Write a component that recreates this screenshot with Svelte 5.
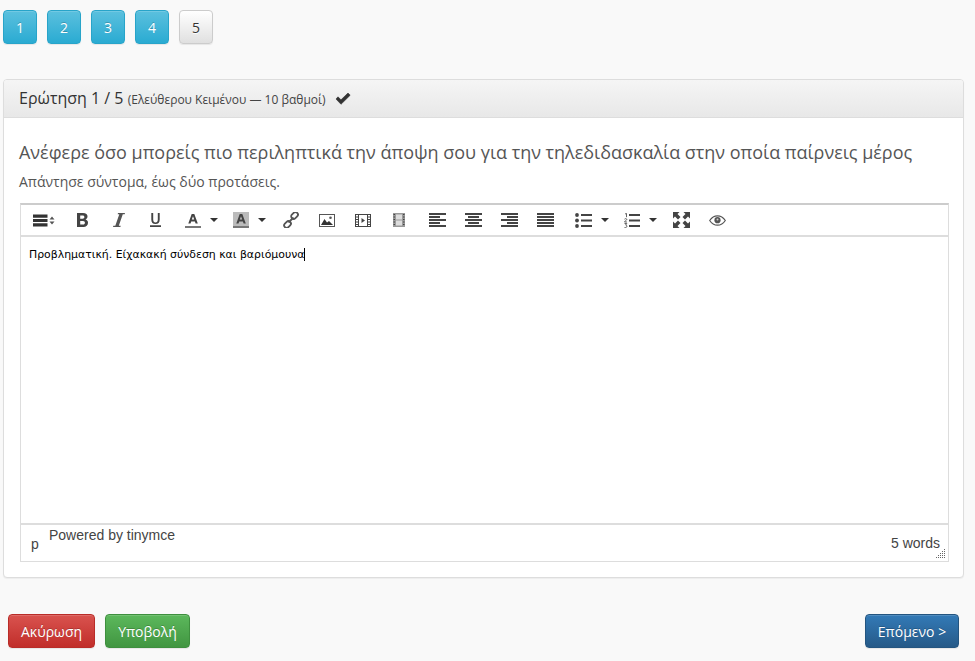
<script>
  const steps = [1, 2, 3, 4];
</script>

<div class="page">
  <nav class="steps">
    {#each steps as s}
      <button class="btn step info">{s}</button>
    {/each}
    <button class="btn step plain">5</button>
  </nav>

  <section class="panel">
    <header class="head">
      <h3>Ερώτηση 1 / 5 <small>(Ελεύθερου Κειμένου — 10 βαθμοί)</small></h3>
      <svg class="check" viewBox="0 0 16 13" width="16" height="13"><path d="M1 7l2-2.2 3 3L13 1l2.2 2.2L6 12.3z" fill="#333" stroke="#333" stroke-width=".6" stroke-linejoin="round"/></svg>
    </header>
    <div class="body">
      <p class="question">Ανέφερε όσο μπορείς πιο περιληπτικά την άποψη σου για την τηλεδιδασκαλία στην οποία παίρνεις μέρος</p>
      <p class="hint">Απάντησε σύντομα, έως δύο προτάσεις.</p>

      <div class="editor">
        <div class="toolbar">
          <span class="tool t-format">
            <svg viewBox="0 0 22 13" width="22" height="13"><path d="M0 .5h14.500v3.200H0zM0 4.900h14.500v3.200H0zM0 9.300h14.500v3.200H0z" fill="#333"/><path d="M16.500 5.600l2.500-3 2.500 3zM16.500 7.400l2.500 3 2.500-3z" fill="#555"/></svg>
          </span>
          <span class="tool t-b"><svg viewBox="0 0 11 14" width="11" height="14"><path fill-rule="evenodd" d="M0 0h6c3 0 4.500 1.300 4.500 3.500 0 1.400-.8 2.500-2 3 1.600.4 2.500 1.600 2.500 3.300C11 12.500 9.200 14 6.300 14H0zM3.200 2.400v3.400h2.400c1.100 0 1.800-.6 1.800-1.700S6.700 2.400 5.600 2.400zM3.200 8v3.600h2.800c1.300 0 1.900-.7 1.900-1.800S7.300 8 6 8z" fill="#444"/></svg></span>
          <span class="tool t-i"><svg viewBox="0 0 12 14" width="12" height="14"><path d="M5 0h7l-.3 1.300H9.800L5.800 12.700h1.900L7.400 14H0l.3-1.300h2L6.300 1.300H4.700z" fill="#555"/></svg></span>
          <span class="tool t-u"><svg viewBox="0 0 11 14" width="11" height="14"><path d="M1.300 0h1.900v6.500c0 1.900.8 2.900 2.300 2.900s2.300-1 2.300-2.900V0h1.900v6.500c0 3-1.500 4.500-4.200 4.500S1.300 9.500 1.300 6.500zM0 12.300h11V14H0z" fill="#444"/></svg></span>
          <span class="tool t-fc">
            <svg viewBox="0 0 16 16" width="16" height="16"><path fill-rule="evenodd" d="M6.700 2h2.600l3.500 9.500h-2.200l-.7-2.100H6.200l-.7 2.100H3.300zM6.800 7.600h2.400L8 4.300z" fill="#444"/><rect y="14" width="16" height="2" fill="#777"/></svg>
            <i class="caret"></i>
          </span>
          <span class="tool t-bc">
            <svg viewBox="0 0 16 16" width="16" height="16"><rect width="16" height="16" fill="#bbb"/><path fill-rule="evenodd" d="M6.700 2h2.600l3.500 9.500h-2.200l-.7-2.100H6.200l-.7 2.100H3.300zM6.800 7.600h2.400L8 4.300z" fill="#444"/><rect y="14" width="16" height="2" fill="#777"/></svg>
            <i class="caret"></i>
          </span>
          <span class="tool t-link"><svg viewBox="0 0 16 16" width="16" height="16"><g fill="none" stroke="#555" stroke-width="1.800"><rect x="7.800" y="1" width="7.500" height="5" rx="2.500" transform="rotate(-45 11.500 3.500)"/><rect x=".8" y="10" width="7.500" height="5" rx="2.500" transform="rotate(-45 4.500 12.500)"/><path d="M5.500 10.500l5-5"/></g></svg></span>
          <span class="tool t-img"><svg viewBox="0 0 16 13" width="16" height="13"><rect x=".5" y=".5" width="15" height="12" fill="#fff" stroke="#555"/><path d="M2 11l3.500-6 2.500 3.500 2-1.500 4 4z" fill="#333"/><circle cx="11.500" cy="3.800" r="1.300" fill="#555"/></svg></span>
          <span class="tool t-vid"><svg viewBox="0 0 16 13" width="16" height="13"><rect x=".5" y=".5" width="15" height="12" fill="#fff" stroke="#444"/><path d="M0 3h3.500M0 5.500h3.500M0 8h3.500M0 10.500h3.500M12.500 3H16M12.500 5.500H16M12.500 8H16M12.500 10.500H16M3.500 0v13M12.500 0v13" stroke="#444"/><path d="M6.500 4L10 6.500 6.500 9z" fill="#444"/></svg></span>
          <span class="tool t-media"><svg viewBox="0 0 12 14" width="12" height="14"><rect width="12" height="14" fill="#999"/><rect x="3" y="1.500" width="6" height="5" fill="#ddd"/><rect x="3" y="7.500" width="6" height="5" fill="#ddd"/><path d="M.5 1.500h1.500M.5 4h1.500M.5 6.500h1.500M.5 9h1.500M.5 11.500h1.500M10 1.500h1.500M10 4h1.500M10 6.500h1.500M10 9h1.500M10 11.500h1.500" stroke="#444"/></svg></span>
          <span class="tool t-al1"><svg viewBox="0 0 17 14" width="17" height="14"><path d="M0 0h17v2H0zM0 3h11v2H0zM0 6h17v2H0zM0 9h11v2H0zM0 12h17v2H0z" fill="#444"/></svg></span>
          <span class="tool t-al2"><svg viewBox="0 0 17 14" width="17" height="14"><path d="M0 0h17v2H0zM3 3h11v2H3zM0 6h17v2H0zM3 9h11v2H3zM0 12h17v2H0z" fill="#444"/></svg></span>
          <span class="tool t-al3"><svg viewBox="0 0 17 14" width="17" height="14"><path d="M0 0h17v2H0zM6 3h11v2H6zM0 6h17v2H0zM6 9h11v2H6zM0 12h17v2H0z" fill="#444"/></svg></span>
          <span class="tool t-al4"><svg viewBox="0 0 17 14" width="17" height="14"><path d="M0 0h17v2H0zM0 3h17v2H0zM0 6h17v2H0zM0 9h17v2H0zM0 12h17v2H0z" fill="#444"/></svg></span>
          <span class="tool t-ul">
            <svg viewBox="0 0 17 15" width="17" height="15"><circle cx="2" cy="2" r="1.900" fill="#444"/><circle cx="2" cy="7.500" r="1.900" fill="#444"/><circle cx="2" cy="13" r="1.900" fill="#444"/><path d="M6 1.100h11v1.800H6zM6 6.600h11v1.800H6zM6 12.100h11v1.800H6z" fill="#444"/></svg>
            <i class="caret"></i>
          </span>
          <span class="tool t-ol">
            <svg viewBox="0 0 16 15" width="16" height="15"><path d="M1 1l1.500-.6V4.200M.5 6.200c.5-.8 2.300-.8 2.300.3 0 .8-2.300 1.500-2.300 2.500h2.500M.5 10.500h2.300l-1.200 1.500c1.800 0 1.800 2.500 0 2.500H.5" fill="none" stroke="#555" stroke-width=".9"/><path d="M5 1.100h11v1.800H5zM5 6.600h11v1.800H5zM5 12.100h11v1.800H5z" fill="#444"/></svg>
            <i class="caret"></i>
          </span>
          <span class="tool t-full"><svg viewBox="0 0 17 16" width="17" height="16"><path d="M0 0h6.500L4.500 2l3 3L5 7.500l-3-3-2 2zM17 0v6.500l-2-2-3 3L9.500 5l3-3-2-2zM0 16V9.500l2 2 3-3L7.500 11l-3 3 2 2zM17 16h-6.500l2-2-3-3L12 8.500l3 3 2-2z" fill="#444"/></svg></span>
          <span class="tool t-eye"><svg viewBox="0 0 17 11" width="17" height="11"><path d="M.7 5.500C3 2 5.700.8 8.500.8s5.500 1.200 7.800 4.700c-2.300 3.500-5 4.700-7.800 4.700S3 9 .7 5.500z" fill="#fff" stroke="#555" stroke-width="1.200"/><circle cx="8.500" cy="5.200" r="3.100" fill="#555"/><circle cx="8.500" cy="4.500" r="1" fill="#ccc"/></svg></span>
        </div>
        <div class="content"><span class="typed">Προβληματική. Είχακακή σύνδεση και βαριόμουνα</span></div>
        <div class="status">
          <span class="path">p</span>
          <span class="powered">Powered by tinymce</span>
          <span class="words">5 words</span>
          <svg class="grip" viewBox="0 0 10 10" width="10" height="10"><g fill="#666"><rect x="8" y="0" width="1" height="1"/><rect x="6" y="2" width="1" height="1"/><rect x="8" y="2" width="1" height="1"/><rect x="4" y="4" width="1" height="1"/><rect x="6" y="4" width="1" height="1"/><rect x="8" y="4" width="1" height="1"/><rect x="2" y="6" width="1" height="1"/><rect x="4" y="6" width="1" height="1"/><rect x="6" y="6" width="1" height="1"/><rect x="8" y="6" width="1" height="1"/><rect x="0" y="8" width="1" height="1"/><rect x="2" y="8" width="1" height="1"/><rect x="4" y="8" width="1" height="1"/><rect x="6" y="8" width="1" height="1"/><rect x="8" y="8" width="1" height="1"/></g></svg>
        </div>
      </div>
    </div>
  </section>

  <footer class="actions">
    <button class="btn danger">Ακύρωση</button>
    <button class="btn success">Υποβολή</button>
    <button class="btn primary next">Επόμενο &gt;</button>
  </footer>
</div>

<style>
  :global(body) {
    margin: 0;
    background: #f9f9f9;
    font-family: "Open Sans", sans-serif;
    color: #444;
  }
  .page {
    height: 661px;
    overflow: hidden;
    box-sizing: border-box;
    padding: 10px 11px 0 3px;
  }
  .btn {
    box-sizing: border-box;
    height: 34px;
    border-radius: 4px;
    font-family: "Open Sans", sans-serif;
    font-size: 14px;
    padding: 0;
    white-space: nowrap;
    border: 1px solid transparent;
    color: #fff;
    text-shadow: 0 -1px 0 rgba(0, 0, 0, .2);
    box-shadow: inset 0 1px 0 rgba(255, 255, 255, .15), 0 1px 1px rgba(0, 0, 0, .075);
  }
  .steps { display: flex; gap: 10px; }
  .step { width: 34px; }
  .info { background: linear-gradient(#5bc0de, #2aabd2); border-color: #28a4c9; }
  .plain {
    background: linear-gradient(#fff, #e0e0e0);
    border-color: #ccc;
    color: #333;
    text-shadow: 0 1px 0 #fff;
  }
  .danger { background: linear-gradient(#d9534f, #c12e2a); border-color: #b92c28; width: 87px; margin-left: 5px; }
  .success { background: linear-gradient(#5cb85c, #419641); border-color: #3e8f3e; width: 85px; }
  .primary { background: linear-gradient(#337ab7, #265a88); border-color: #245580; width: 94px; }
  .panel {
    box-sizing: border-box;
    margin-top: 35px;
    width: 961px;
    height: 499px;
    background: #fff;
    border: 1px solid #ddd;
    border-radius: 4px;
    box-shadow: 0 1px 1px rgba(0, 0, 0, .05);
    overflow: hidden;
  }
  .head {
    box-sizing: border-box;
    height: 38px;
    padding: 0 15px;
    display: flex;
    align-items: center;
    gap: 9px;
    background: linear-gradient(#f5f5f5, #e8e8e8);
    border-bottom: 1px solid #ddd;
  }
  h3 { margin: 0; font-size: 16px; font-weight: 400; color: #333; line-height: 18px; }
  small { font-size: 12px; color: #444; }
  .check { flex: none; }
  .body { padding: 0 15px; }
  .question { margin: 21px 0 0; font-size: 18px; letter-spacing: -0.01px; line-height: 26px; color: #555; white-space: nowrap; }
  .hint { margin: 7px 0 0; font-size: 14px; line-height: 20px; color: #555; }
  .editor {
    box-sizing: border-box;
    margin: 11px 0 0 1px;
    width: 929px;
    height: 359px;
    border: 1px solid #ddd;
    border-top: 2px solid #ccc;
    display: flex;
    flex-direction: column;
    background: #fff;
  }
  .toolbar {
    box-sizing: border-box;
    height: 32px;
    flex: none;
    position: relative;
    border-bottom: 2px solid #ddd;
  }
  .tool { position: absolute; top: 0; height: 30px; display: flex; align-items: center; gap: 9px; }
  .caret { width: 0; height: 0; border-left: 4px solid transparent; border-right: 4px solid transparent; border-top: 4px solid #333; }
  .t-format { left: 12px; }
  .t-b { left: 56px; }
  .t-i { left: 92px; }
  .t-u { left: 129px; }
  .t-fc { left: 164px; }
  .t-bc { left: 212px; }
  .t-link { left: 262px; }
  .t-img { left: 298px; }
  .t-vid { left: 334px; }
  .t-media { left: 372px; }
  .t-al1 { left: 408px; }
  .t-al2 { left: 444px; }
  .t-al3 { left: 480px; }
  .t-al4 { left: 516px; }
  .t-ul { left: 554px; }
  .t-ol { left: 603px; }
  .t-full { left: 652px; }
  .t-eye { left: 688px; }
  .content {
    flex: 1;
    padding: 10px 8px;
    font-family: "DejaVu Sans", Verdana, sans-serif;
    font-size: 10.9px;
    line-height: 16px;
    color: #000;
  }
  .typed { border-right: 1px solid #000; }
  .status {
    box-sizing: border-box;
    flex: none;
    height: 38px;
    border-top: 2px solid #ddd;
    position: relative;
    font-family: "Liberation Sans", Arial, sans-serif;
    font-size: 14px;
    line-height: 16px;
    color: #444;
  }
  .path { position: absolute; left: 10px; top: 11px; }
  .powered { position: absolute; left: 28px; top: 2px; }
  .words { position: absolute; right: 8px; top: 10px; }
  .grip { position: absolute; right: 2px; bottom: 2px; }
  .actions { display: flex; gap: 10px; margin-top: 36px; }
  .next { margin-left: auto; margin-right: 5px; }
</style>
